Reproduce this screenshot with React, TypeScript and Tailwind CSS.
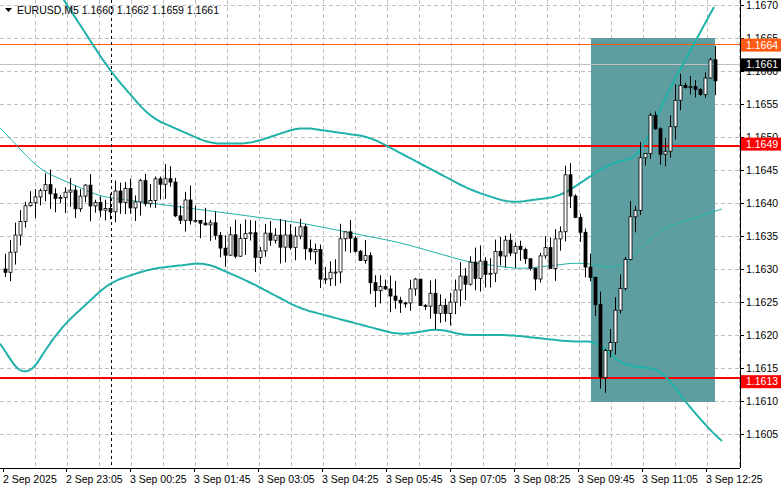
import React from "react";

const W = 740, H = 468;
const py = (p: number) => 5 + ((1.167 - p) / 0.0005) * 33;

function interp(pts: [number, number][], x: number) {
  if (x <= pts[0][0]) return pts[0][1];
  for (let i = 1; i < pts.length; i++) {
    if (x <= pts[i][0]) {
      const [x0, y0] = pts[i - 1], [x1, y1] = pts[i];
      return y0 + ((y1 - y0) * (x - x0)) / (x1 - x0);
    }
  }
  return pts[pts.length - 1][1];
}
function smooth(pts: [number, number][], x: number) {
  let s = 0, n = 0;
  for (let d = -12; d <= 12; d += 2) { s += interp(pts, x + d); n++; }
  return s / n;
}

const path: [number, number][] = [[5,1.1630],[20,1.1636],[40,1.1640],[70,1.1642],[100,1.1640],[130,1.1640],[160,1.1643],[200,1.1638],[215,1.1635],[260,1.1633],[300,1.1635],[330,1.1630],[360,1.1635],[380,1.1628],[420,1.1626],[445,1.1623],[470,1.1628],[500,1.1632],[520,1.1633],[535,1.1628],[560,1.1633],[570,1.1642],[585,1.1635],[598,1.1626],[605,1.1614],[612,1.1617],[625,1.1625],[640,1.1641],[655,1.1653],[670,1.1648],[680,1.1655],[700,1.1657],[715,1.1661]];
const upper: [number, number][] = [[50,1.1674],[80,1.1667],[110,1.1660],[150,1.1653],[210,1.1649],[250,1.1649],[300,1.16515],[370,1.1650],[420,1.1646],[470,1.1642],[510,1.1640],[560,1.1641],[590,1.1644],[610,1.1646],[640,1.1647],[665,1.1656],[690,1.1663],[715,1.1670],[730,1.1674]];
const lower: [number, number][] = [[-10,1.1621],[25,1.1613],[60,1.1621],[110,1.1628],[150,1.1630],[205,1.1631],[250,1.1628],[300,1.1624],[350,1.1622],[400,1.1620],[440,1.1621],[460,1.1620],[510,1.1620],[570,1.1619],[600,1.1619],[615,1.1616],[640,1.1615],[660,1.1615],[690,1.1609],[720,1.1604],[740,1.1602]];
const mid: [number, number][] = [[-10,1.1653],[40,1.1645],[100,1.1641],[200,1.1639],[300,1.1637],[400,1.1634],[470,1.1631],[520,1.1630],[580,1.1631],[620,1.1630],[660,1.1636],[720,1.1639],[740,1.1640]];

function line(pts: [number, number][], x0: number, x1: number) {
  const out: string[] = [];
  for (let x = x0; x <= x1; x += 2) out.push(`${x},${py(smooth(pts, x)).toFixed(1)}`);
  return out.join(" ");
}

let seed = 7;
const rnd = () => { seed = (seed * 16807) % 2147483647; return seed / 2147483647; };

const candles: { x: number; o: number; c: number; h: number; l: number }[] = [];
let prev = interp(path, 5);
for (let x = 5; x <= 715; x += 5) {
  const target = interp(path, x + 5);
  const o = prev;
  const c = target + (rnd() - 0.5) * 0.0005;
  const h = Math.max(o, c) + rnd() * 0.00025;
  const l = Math.min(o, c) - rnd() * 0.00025;
  candles.push({ x, o, c, h, l });
  prev = c;
}

const prices = [1.167,1.1665,1.166,1.1655,1.165,1.1645,1.164,1.1635,1.163,1.1625,1.162,1.1615,1.161,1.1605];
const times = [[3,"2 Sep 2025"],[66,"2 Sep 23:05"],[130,"3 Sep 00:25"],[194,"3 Sep 01:45"],[258,"3 Sep 03:05"],[322,"3 Sep 04:25"],[386,"3 Sep 05:45"],[450,"3 Sep 07:05"],[514,"3 Sep 08:25"],[578,"3 Sep 09:45"],[642,"3 Sep 11:05"],[706,"3 Sep 12:25"]] as [number,string][];

const tags: [number, string, string][] = [[1.1664,"#ff5a14","1.1664"],[1.1661,"#000","1.1661"],[1.1649,"#ff0000","1.1649"],[1.1613,"#ff0000","1.1613"]];

export default function App() {
  return (
    <div className="w-[781px] h-[489px] bg-white overflow-hidden" style={{ fontFamily: "'Liberation Sans', Arial, sans-serif" }}>
      <svg width={781} height={489} className="block" fontFamily="'Liberation Sans', Arial, sans-serif" fontSize={10.5}>
        <defs>
          <clipPath id="plot"><rect x={0} y={0} width={W} height={H} /></clipPath>
        </defs>
        {Array.from({ length: 23 }, (_, i) => 35 + i * 32).filter(x => x < W).map(x => (
          <line key={"v"+x} x1={x+0.5} y1={0} x2={x+0.5} y2={H} stroke="#c0c0c0" strokeDasharray="4 3" />
        ))}
        {prices.map(p => (
          <line key={"h"+p} x1={0} y1={Math.round(py(p))+0.5} x2={W} y2={Math.round(py(p))+0.5} stroke="#c0c0c0" strokeDasharray="4 3" />
        ))}
        <rect x={591} y={38} width={124} height={364} fill="#5f9ea0" />
        <line x1={0} y1={44.5} x2={W} y2={44.5} stroke="#ff5a14" />
        <line x1={0} y1={64.5} x2={W} y2={64.5} stroke="#c0c0c0" />
        <line x1={0} y1={146} x2={W} y2={146} stroke="#ff0000" strokeWidth={2} />
        <line x1={0} y1={378} x2={W} y2={378} stroke="#ff0000" strokeWidth={2} />
        <line x1={111.5} y1={0} x2={111.5} y2={H} stroke="#000" strokeDasharray="3 3" />
        <g clipPath="url(#plot)">
          <polyline points={line(upper, 60, 715)} fill="none" stroke="#20b2aa" strokeWidth={2} />
          <polyline points={line(lower, 0, 722)} fill="none" stroke="#20b2aa" strokeWidth={2} />
          <polyline points={line(mid, 0, 722)} fill="none" stroke="#20b2aa" strokeWidth={1} />
        </g>
        {candles.map((k, i) => {
          const bull = k.c >= k.o;
          const top = py(Math.max(k.o, k.c)), bot = py(Math.min(k.o, k.c));
          return (
            <g key={i}>
              <line x1={k.x + 0.5} y1={py(k.h)} x2={k.x + 0.5} y2={py(k.l)} stroke="#000" />
              <rect x={k.x - 1} y={top} width={3} height={Math.max(1, bot - top)} fill={bull ? "#fff" : "#000"} stroke="#000" strokeWidth={0.8} />
            </g>
          );
        })}
        <polygon points="5,8 12,8 8.5,12" fill="#000" />
        <text x={17} y={14} fill="#000">EURUSD,M5  1.1660 1.1662 1.1659 1.1661</text>
        <rect x={W} y={0} width={41} height={489} fill="#fff" />
        <rect x={0} y={H} width={781} height={21} fill="#fff" />
        <line x1={W+0.5} y1={0} x2={W+0.5} y2={H} stroke="#000" />
        <line x1={0} y1={H+0.5} x2={W} y2={H+0.5} stroke="#000" />
        {prices.map(p => (
          <g key={"l"+p}>
            <line x1={W} y1={Math.round(py(p))+0.5} x2={W+4} y2={Math.round(py(p))+0.5} stroke="#000" />
            <text x={746} y={py(p) + 4} fill="#000">{p.toFixed(4)}</text>
          </g>
        ))}
        {tags.map(([p, c, t]) => (
          <g key={t}>
            <rect x={741} y={py(p) - 6} width={40} height={13} fill={c} />
            <text x={746} y={py(p) + 4} fill="#fff">{t}</text>
          </g>
        ))}
        {times.map(([x, t]) => (
          <g key={t}>
            <line x1={x+0.5} y1={H} x2={x+0.5} y2={H+4} stroke="#000" />
            <text x={x} y={H + 15} fill="#000">{t}</text>
          </g>
        ))}
      </svg>
    </div>
  );
}
